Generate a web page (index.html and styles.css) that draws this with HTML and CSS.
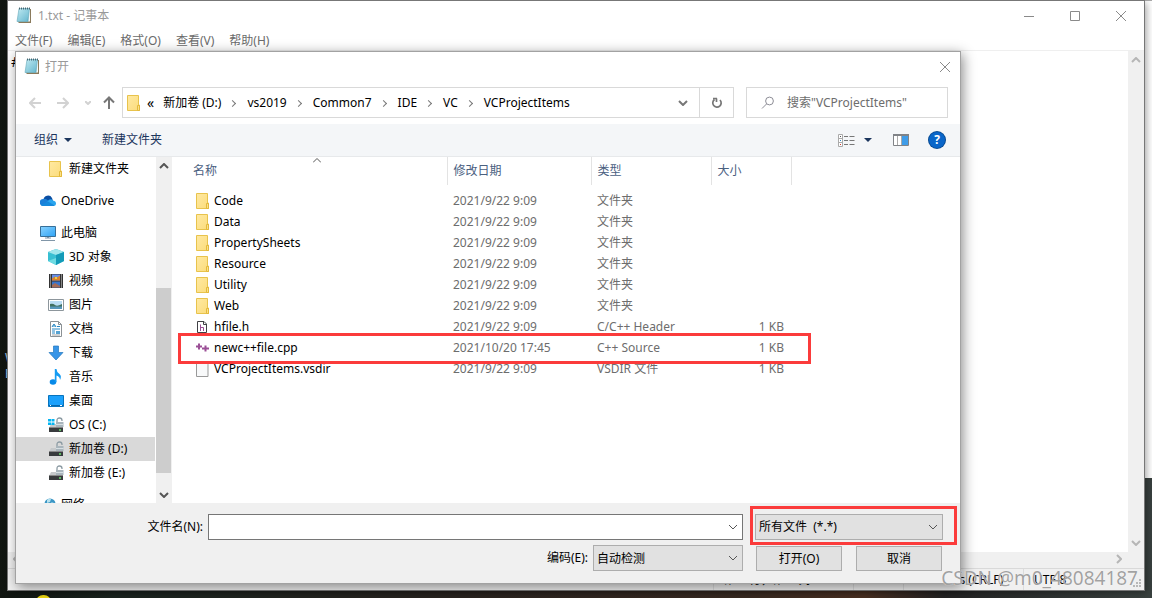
FILE: index.html
```html
<!DOCTYPE html>
<html lang="zh-CN">
<head>
<meta charset="utf-8">
<title>1.txt - 记事本</title>
<link rel="stylesheet" href="styles.css">
</head>
<body>
<svg class="defs" aria-hidden="true">
  <defs>
    <linearGradient id="gFolder" x1="0" y1="0" x2="1" y2="1"><stop offset="0" stop-color="#ffe9a2"/><stop offset="1" stop-color="#fbdc7b"/></linearGradient>
    <linearGradient id="gPad" x1="0" y1="0" x2="1" y2="1"><stop offset="0" stop-color="#c9eef5"/><stop offset="1" stop-color="#4fa9c4"/></linearGradient>
    <linearGradient id="gScreen" x1="0" y1="0" x2="1" y2="1"><stop offset="0" stop-color="#8ad3ff"/><stop offset="1" stop-color="#2ea3f5"/></linearGradient>
    <symbol id="folder" viewBox="0 0 14 16"><path d="M.5.5h11v9.500h1v5.500H.5z" fill="url(#gFolder)" stroke="#e8c34c"/><path d="M10.500 15.500v-5h2v5z" fill="#fbe189" stroke="#e3b93c"/></symbol>
    <symbol id="notepad" viewBox="0 0 16 17"><path d="M4 2h11v14H3l-1-1z" fill="#8a7a5c"/><path d="M4 2h10v12.500H2z" fill="#f4f8f8"/><path d="M3 1.500h10.500L12 14.500H1z" fill="url(#gPad)" stroke="#64a9bb" stroke-width=".6"/><path d="M3.500 5h9M3.300 7h9M3 9h9M2.700 11h9M2.400 13h9" stroke="#a6dce8" stroke-width=".5"/><path d="M3.500.5v2M5.500.5v2M7.500.5v2M9.500.5v2M11.500.5v2M13.500.5v2" stroke="#3b5964" stroke-width=".9"/></symbol>
    <symbol id="lock" viewBox="0 0 16 16"><path d="M9 6V3.500Q9 1 11.500 1T14 3.500V4" fill="none" stroke="#8d9ca4" stroke-width="1.300"/><path d="M8 5h7.500v5H8z" fill="#a9b5bc"/><path d="M8 7.500h7.500" stroke="#d7dfe3"/><path d="M3 7h5v3h7v1H1z" fill="#c6c9cb"/><path d="M1 10.500h14V15H1z" fill="#383b3d"/><path d="M1 10.500h14" stroke="#888"/><path d="M11 13h2" stroke="#67e06b" stroke-width="1.500"/></symbol>
    <symbol id="down" viewBox="0 0 10 6"><path d="M1 1l4 4 4-4" fill="none" stroke="currentColor"/></symbol>
  </defs>
</svg>
<div class="desktop">
  <span class="desk-label">W<br>E</span>
  <span class="desk-icon"></span>
  <div class="back-window"></div>

  <section class="notepad">
    <header class="titlebar">
      <svg class="app-icon"><use href="#notepad"/></svg>
      <h1>1.txt - 记事本</h1>
      <div class="caption">
        <button aria-label="最小化"><svg viewBox="0 0 12 12"><path d="M1 6.500h10"/></svg></button>
        <button aria-label="最大化"><svg viewBox="0 0 12 12"><path d="M1.500 1.500h9v9h-9z"/></svg></button>
        <button aria-label="关闭"><svg viewBox="0 0 12 12"><path d="M1 1l10 10M11 1L1 11"/></svg></button>
      </div>
    </header>
    <nav class="menubar"><button>文件(F)</button><button>编辑(E)</button><button>格式(O)</button><button>查看(V)</button><button>帮助(H)</button></nav>
    <div class="editor">
      <div class="page">#</div>
      <div class="vbar"><svg viewBox="0 0 10 6"><path d="M1 5l4-4 4 4"/></svg><svg viewBox="0 0 10 6"><path d="M1 1l4 4 4-4"/></svg></div>
    </div>
    <div class="hbar"><svg viewBox="0 0 6 10"><path d="M5 1L1 5l4 4"/></svg><svg viewBox="0 0 6 10"><path d="M1 1l4 4-4 4"/></svg></div>
    <footer class="status"><span class="pos">第 1 行，第 1 列</span><span class="pct">100%</span><span class="eol">Windows (CRLF)</span><span class="enc">UTF-8</span></footer>
    <svg class="grip" viewBox="0 0 9 9"><path d="M6 0h2v2H6zM3 3h2v2H3zM6 3h2v2H6zM0 6h2v2H0zM3 6h2v2H3zM6 6h2v2H6z"/></svg>
  </section>

  <section class="dialog">
    <header class="dlg-title">
      <svg class="app-icon"><use href="#notepad"/></svg>
      <h2>打开</h2>
      <button aria-label="关闭对话框"><svg viewBox="0 0 12 12"><path d="M1 1l10 10M11 1L1 11"/></svg></button>
    </header>

    <div class="navrow">
      <div class="arrows">
        <button aria-label="后退"><svg width="12" height="12" viewBox="0 0 12 12"><path d="M12 6H1M6 1L1 6l5 5"/></svg></button>
        <button aria-label="前进"><svg width="12" height="12" viewBox="0 0 12 12"><path d="M0 6h11M6 1l5 5-5 5"/></svg></button>
        <button class="recent" aria-label="最近"><svg width="6" height="4" viewBox="0 0 6 4"><path d="M0 0l3 3 3-3"/></svg></button>
        <button class="up" aria-label="上移"><svg width="12" height="13" viewBox="0 0 12 13"><path d="M6 13V1.500M1 6.500l5-5 5 5"/></svg></button>
      </div>
      <div class="address">
        <svg class="folder"><use href="#folder"/></svg>
        <span class="more">«</span>
        <button>新加卷 (D:)</button><i></i><button>vs2019</button><i></i><button>Common7</button><i></i><button>IDE</button><i></i><button>VC</button><i></i><button>VCProjectItems</button>
        <button class="drop" aria-label="展开"><svg width="10" height="6" viewBox="0 0 10 6"><path d="M1 1l4 4 4-4"/></svg></button>
        <button class="refresh" aria-label="刷新"><svg width="12" height="12" viewBox="0 0 12 12"><path d="M5.500 1.500V5M2 1.500h4M3.500 2.500A4.200 4.200 0 1 0 9 3" stroke-width="1.700"/></svg></button>
      </div>
      <label class="search"><svg width="14" height="14" viewBox="0 0 14 14"><circle cx="8.500" cy="5" r="3.900"/><path d="M5.500 8L1 12.500"/></svg><input type="text" aria-label="搜索" placeholder='搜索"VCProjectItems"'></label>
    </div>

    <div class="toolbar">
      <button>组织<b class="tri"></b></button>
      <button>新建文件夹</button>
      <div class="tools">
        <button aria-label="更改视图"><svg width="17" height="13" viewBox="0 0 17 13"><path d="M.5.5h4v12h-4zM.5 4.500h4M.5 8.500h4" fill="#fff" stroke="#aaa"/><path d="M2 2h1v1H2z" fill="#555"/><path d="M2 6h1v1H2z" fill="#2b88c8"/><path d="M2 10h1v1H2z" fill="#d23b2e"/><path d="M6 2.500h4m1.500 0h5M6 6.500h4m1.500 0h5M6 10.500h4m1.500 0h5" stroke="#777"/></svg></button>
        <button class="viewdrop" aria-label="视图选项"><b class="tri"></b></button>
        <button class="pane" aria-label="预览窗格"><svg width="16" height="12" viewBox="0 0 16 12"><path d="M.5.5h15v11H.5z" fill="#fff" stroke="#808387"/><path d="M0 0h16v2H0z" fill="#808387"/><path d="M4.500 2v9M8.500 2v9" stroke="#aaa"/><path d="M9 2h6v9H9z" fill="#3f9ce8"/></svg></button>
        <button class="help" aria-label="帮助">?</button>
      </div>
    </div>

    <div class="content">
      <nav class="tree">
        <a href="#" class="child"><svg class="folder"><use href="#folder"/></svg>新建文件夹</a>
        <a href="#" class="root"><svg viewBox="0 0 16 16"><path d="M3.500 7A4.500 4.500 0 0 1 12 5l1 3-8 3z" fill="#0a4ea3"/><path d="M3.500 13A3.500 3.500 0 0 1 3 6q2.500-.8 4.500 1L13 11z" fill="#1b7fd8"/><path d="M7.500 8.500Q10 4.500 13 7.500q3 .5 3 3T13 13H3.500z" fill="#2aa5ee"/><path d="M1 12l7-3.500 6.500 4Q14 13 13 13H3.500Q2 13 1 12z" fill="#1689dc"/></svg>OneDrive</a>
        <a href="#" class="root pc"><svg viewBox="0 0 16 16"><path d="M.5 1.500h15v10H.5z" fill="url(#gScreen)" stroke="#376f98"/><path d="M5 13h6M1 15.500h14" stroke="#8196a8"/><path d="M7 12h2v1H7z" fill="#8196a8"/></svg>此电脑</a>
        <a href="#" class="child"><svg viewBox="0 0 16 16"><path d="M8 0l8 3v9l-8 4-8-4V3z" fill="#37bfd2"/><path d="M8 0l8 3-8 3-8-3z" fill="#a0e6ec"/><path d="M8 6l8-3v9l-8 4z" fill="#139bb8"/><path d="M0 12l8-3v7z" fill="#6fdbe2"/></svg>3D 对象</a>
        <a href="#" class="child"><svg viewBox="0 0 16 16"><path d="M1 1h14v14H1z" fill="#333"/><path d="M4 1.500h8v6H4z" fill="#668ee8"/><path d="M4 5.500l3-2 2 1 3-2v5H4z" fill="#dc802d"/><path d="M7 4h2v2H7z" fill="#e5d344"/><path d="M4 8.500h8v6H4z" fill="#3a75cb"/><path d="M4 12l3-2 5 3v1.500H4z" fill="#a46c59"/><path d="M2.500 1.500v13M13.500 1.500v13" stroke="#ddd" stroke-dasharray="1 1"/></svg>视频</a>
        <a href="#" class="child"><svg viewBox="0 0 16 16"><path d="M.5 2.500h15v11H.5z" fill="#fff" stroke="#8d969c"/><path d="M2 4h12v8H2z" fill="#b9dcf3"/><path d="M2 7q3-1 5 1t7-1v3H2z" fill="#41705f"/><path d="M2 9.500h12V12H2z" fill="#5696bb"/></svg>图片</a>
        <a href="#" class="child"><svg viewBox="0 0 16 16"><path d="M2.500.5h8l3 3v12h-11z" fill="#fff" stroke="#8b9195"/><path d="M10.500.5v3h3" fill="none" stroke="#8b9195"/><path d="M4 6l2-3 2 3M4.500 5h3M4 8h8M4 10h3M4 12h3M9 5.500h3" fill="none" stroke="#2588c5"/><path d="M8 10h4v3H8z" fill="#56a2d1"/><path d="M4 14h8" stroke="#666" stroke-width=".6"/></svg>文档</a>
        <a href="#" class="child"><svg viewBox="0 0 16 16"><path d="M5.500 1h5v6.500h4.500L8 15 1 7.500h4.500z" fill="#3795e7" stroke="#2377bd" stroke-width=".7"/></svg>下载</a>
        <a href="#" class="child"><svg viewBox="0 0 16 16"><ellipse cx="5" cy="13" rx="3.300" ry="2.700" fill="#0789e8"/><path d="M6.800 13V0h1.700q0 3 3 5 2.500 2 .5 6 0-3.500-3.500-4.500V13z" fill="#159cf3"/></svg>音乐</a>
        <a href="#" class="child"><svg viewBox="0 0 16 16"><path d="M.5 2.500h15v11H.5z" fill="#1ba1fc" stroke="#0874bd"/><path d="M1 12.500h14" stroke="#0868ad"/><path d="M2 12.500h1m9 0h2" stroke="#fff"/></svg>桌面</a>
        <a href="#" class="child"><svg viewBox="0 0 16 16"><use href="#lock"/><path d="M0 2h3v2.500H0zM3.500 2h3v2.500h-3zM0 5.500h3V8H0zM3.500 5.500h3V8h-3z" fill="#04b5f2"/></svg>OS (C:)</a>
        <a href="#" class="child selected"><svg><use href="#lock"/></svg>新加卷 (D:)</a>
        <a href="#" class="child"><svg><use href="#lock"/></svg>新加卷 (E:)</a>
        <a href="#" class="root net"><svg viewBox="0 0 16 16"><circle cx="10" cy="7" r="5.500" fill="#3b96c5"/><path d="M7 3q2-2 4-1l-1 3-3 1zM11 5l3 1v3z" fill="#b8e2ee"/></svg>网络</a>
      </nav>
      <div class="treebar"><svg viewBox="0 0 10 6"><path d="M1 5l4-4 4 4"/></svg><div class="track"><div class="thumb"></div></div><svg viewBox="0 0 10 6"><path d="M1 1l4 4 4-4"/></svg></div>
      <div class="files">
        <svg class="sort" width="8" height="5" viewBox="0 0 8 5"><path d="M0 4.500l4-4 4 4"/></svg>
        <table>
          <colgroup><col class="c-name"><col class="c-date"><col class="c-type"><col class="c-size"></colgroup>
          <thead><tr><th>名称</th><th>修改日期</th><th>类型</th><th>大小</th></tr></thead>
          <tbody>
            <tr><td><span class="name"><svg class="folder"><use href="#folder"/></svg>Code</span></td><td>2021/9/22 9:09</td><td>文件夹</td><td></td></tr>
            <tr><td><span class="name"><svg class="folder"><use href="#folder"/></svg>Data</span></td><td>2021/9/22 9:09</td><td>文件夹</td><td></td></tr>
            <tr><td><span class="name"><svg class="folder"><use href="#folder"/></svg>PropertySheets</span></td><td>2021/9/22 9:09</td><td>文件夹</td><td></td></tr>
            <tr><td><span class="name"><svg class="folder"><use href="#folder"/></svg>Resource</span></td><td>2021/9/22 9:09</td><td>文件夹</td><td></td></tr>
            <tr><td><span class="name"><svg class="folder"><use href="#folder"/></svg>Utility</span></td><td>2021/9/22 9:09</td><td>文件夹</td><td></td></tr>
            <tr><td><span class="name"><svg class="folder"><use href="#folder"/></svg>Web</span></td><td>2021/9/22 9:09</td><td>文件夹</td><td></td></tr>
            <tr><td><span class="name"><svg class="folder" viewBox="0 0 14 16"><path d="M1.500 2.500h6.500l2.500 2.500v8.500h-9z" fill="#fff" stroke="#404045"/><path d="M7.500 2.500v3h3" fill="none" stroke="#404045"/><path d="M4.500 5.500V12M4.500 8.500h3V12" fill="none" stroke="#9b4f96"/></svg>hfile.h</span></td><td>2021/9/22 9:09</td><td>C/C++ Header</td><td>1 KB</td></tr>
            <tr><td><span class="name"><svg class="folder" viewBox="0 0 14 16"><path d="M0 6.500h6M3 3.500v6M6 8.500h7M9.500 5.500v6" stroke="#9b4f96" stroke-width="2"/></svg>newc++file.cpp</span></td><td>2021/10/20 17:45</td><td>C++ Source</td><td>1 KB</td></tr>
            <tr><td><span class="name"><svg class="folder" viewBox="0 0 14 16"><path d="M.5.5h9l2.500 3v12H.5z" fill="#f8f9fa" stroke="#999"/></svg>VCProjectItems.vsdir</span></td><td>2021/9/22 9:09</td><td>VSDIR 文件</td><td>1 KB</td></tr>
          </tbody>
        </table>
        <div class="mark-row"></div>
      </div>
    </div>

    <form class="bottom">
      <label for="fname">文件名(N):</label>
      <div class="field name-field"><input id="fname" type="text"><svg><use href="#down"/></svg></div>
      <div class="field filter"><select aria-label="文件类型"><option>所有文件&nbsp; (*.*)</option></select><svg><use href="#down"/></svg><span class="mark-filter"></span></div>
      <div class="encoding"><label for="enc">编码(E):</label><div class="field"><select id="enc"><option>自动检测</option></select><svg><use href="#down"/></svg></div></div>
      <div class="actions"><button type="button">打开(O)</button><button type="button">取消</button></div>
    </form>
  </section>
  <div class="watermark">CSDN @m0_48084187</div>
</div>
</body>
</html>
```
FILE: styles.css
```css
* { box-sizing: border-box; }
body { margin: 0; font: 12px/16px "Noto Sans", "Noto Sans CJK SC", sans-serif; color: #000; }
button, input, select { font: inherit; color: inherit; border: 0; border-radius: 0; padding: 0; margin: 0; background: none; }
a { color: inherit; text-decoration: none; }
h1, h2 { margin: 0; font-size: 12px; font-weight: 400; color: #999; }
svg { display: block; flex: none; fill: none; }
.defs { position: absolute; width: 0; height: 0; }
.folder { width: 14px; height: 16px; }
.app-icon { width: 16px; height: 17px; }

.desktop { position: relative; height: 100vh; min-height: 500px; overflow: hidden; background: linear-gradient(90deg, #111611 0, #1b2520 10%, #2a2420 40%, #3a2b22 65%, #4a3022 75%, #232323 82%, #39413f 100%); }
.desk-label { position: absolute; left: 5px; top: 350px; color: #a9c8ea; }
.desk-icon { position: absolute; left: 36px; bottom: -11px; width: 15px; height: 14px; border-radius: 8px; background: #f3dc14; }
.back-window { position: absolute; top: 0; right: 0; bottom: 120px; width: 637px; background: #fff; border-top: 1px solid #aaa; }

.notepad { position: absolute; inset: 1px 8px 8px; display: flex; flex-direction: column; background: #fff; box-shadow: 0 0 0 1px #777, 2px 2px 8px rgba(0,0,0,.4); }
.titlebar { display: flex; align-items: center; gap: 6px; height: 29px; padding-left: 8px; }
.caption { display: flex; margin-left: auto; }
.caption button, .dlg-title button { width: 46px; height: 28px; display: grid; place-items: center; }
.caption svg, .dlg-title button svg { width: 12px; height: 12px; stroke: #8a8a8a; }
.menubar { display: flex; gap: 15px; height: 20px; padding: 3px 7px 1px; color: #6b6b6b; }
.editor { flex: 1; display: flex; border-top: 1px solid #efefef; min-height: 0; }
.page { flex: 1; padding: 3px; font-size: 14px; }
.vbar, .hbar { display: flex; justify-content: space-between; background: #f0f0f0; }
.vbar { flex-direction: column; align-items: center; width: 16px; padding: 6px 0; }
.hbar { align-items: center; height: 17px; padding: 0 22px 2px 5px; border-bottom: 1px solid #d9d9d9; }
.vbar svg { width: 10px; height: 6px; stroke: #b6b6b6; stroke-width: 2; }
.hbar svg { width: 6px; height: 10px; stroke: #b6b6b6; stroke-width: 2; }
.status { display: flex; justify-content: flex-end; height: 21px; background: #f0f0f0; white-space: nowrap; line-height: 21px; }
.status span { border-left: 1px solid #dcdcdc; padding-left: 10px; }
.pos { width: 140px; }
.pct { width: 50px; }
.eol { width: 120px; }
.enc { width: 121px; }
.grip { position: absolute; right: 2px; bottom: 2px; width: 9px; height: 9px; fill: #b8b8b8; }

.dialog { position: absolute; inset: 51px 191px 14px 15px; display: flex; flex-direction: column; background: #fff; border: 1px solid #a2a2a2; box-shadow: 2px 3px 12px rgba(0,0,0,.45); }
.dlg-title { display: flex; align-items: center; gap: 5px; height: 29px; padding-left: 8px; }
.dlg-title button { margin-left: auto; width: 30px; }
.navrow { display: flex; height: 43px; padding: 6px 12px 6px 13px; }
.arrows { display: flex; align-items: center; width: 93px; stroke: #d2d2d2; stroke-width: 2; }
.arrows button { width: 28px; }
.arrows .recent { width: 18px; }
.arrows .up { width: 14px; stroke: #777; }
.address { flex: 1; display: flex; align-items: center; border: 1px solid #d9d9d9; padding-left: 4px; min-width: 0; white-space: nowrap; }
.address .more { padding: 0 9px 0 6px; font-size: 14px; }
.address i { width: 5px; height: 5px; margin: 2px 12px 0 9px; border: solid #777; border-width: 1px 1px 0 0; transform: rotate(45deg); }
.address .drop { flex: none; margin-left: auto; width: 32px; padding-left: 11px; height: 100%; stroke: #777; stroke-width: 2; }
.address .refresh { flex: none; width: 34px; height: 100%; padding-left: 11px; border-left: 1px solid #d9d9d9; stroke: #777; }
.search { display: flex; align-items: center; gap: 12px; width: 202px; margin-left: 12px; padding-left: 14px; border: 1px solid #d9d9d9; stroke: #8d8d96; }
.search input { width: 150px; outline: 0; }
.search input::placeholder { color: #6d6d6d; opacity: 1; }
.toolbar { display: flex; align-items: center; gap: 30px; height: 33px; padding: 0 15px 0 18px; background: #f4f6f8; border-bottom: 1px solid #e7e9eb; color: #1b355d; }
.toolbar button { display: flex; align-items: center; gap: 6px; }
.tri { border: solid transparent; border-width: 4px 4px 0; border-top-color: #1b355d; }
.tools { display: flex; align-items: center; margin-left: auto; }
.tools .viewdrop { margin: 0 21px 0 9px; }
.tools .pane { margin-right: 20px; }
.tools .help { width: 16px; height: 16px; border-radius: 50%; background: #0a66c9; box-shadow: 0 0 0 1px #084a91; justify-content: center; color: #fff; font-weight: 700; }

.content { flex: 1; display: flex; min-height: 0; overflow: hidden; }
.tree { width: 140px; overflow: hidden; white-space: nowrap; }
.tree a { display: flex; align-items: center; gap: 5px; height: 24px; margin-right: 1px; }
.tree svg { width: 16px; height: 16px; }
.child { padding-left: 32px; }
.root { padding-left: 24px; }
.tree .root { margin-top: 8px; }
.selected { background: #d9d9d9; }
.treebar { display: flex; flex-direction: column; align-items: center; width: 16px; padding: 6px 0 5px; background: #f0f0f0; }
.treebar > svg { width: 10px; height: 6px; stroke: #555; stroke-width: 2; }
.track { flex: 1; width: 100%; display: flex; flex-direction: column; justify-content: flex-end; padding: 0 1px 19px 0; }
.thumb { height: 61%; background: #cdcdcd; }
.files { position: relative; flex: 1; min-width: 0; padding-left: 15px; }
.sort { position: absolute; left: 141px; top: 1px; stroke: #555; }
table { border-collapse: collapse; table-layout: fixed; width: 604px; }
.c-name { width: 260px; }
.c-date { width: 144px; }
.c-type { width: 120px; }
.c-size { width: 80px; }
th { height: 28px; padding: 0 6px; text-align: left; font-weight: 400; color: #4a607f; border-right: 1px solid #e3e3e3; }
thead::after { content: ""; display: block; height: 5px; }
td { height: 21px; padding: 0 6px; color: #6d6d6d; white-space: nowrap; }
td:first-child { color: #000; padding-left: 9px; }
td:last-child { text-align: right; padding-right: 7px; }
.name { display: flex; align-items: center; gap: 4px; }
.mark-row { position: absolute; left: 6px; top: 176px; width: 633px; height: 31px; border: 3px solid #fb3b3b; }

.bottom { display: grid; grid-template-columns: 188px 1fr 188px; column-gap: 4px; align-items: start; align-content: start; height: 80px; padding: 11px 17px 0 0; background: #f0f0f0; }
.bottom > label { text-align: right; line-height: 26px; padding-right: 1px; }
.field { position: relative; height: 26px; background: #e1e1e1; border: 1px solid #adadad; }
.field input, .field select { display: block; width: 100%; height: 100%; padding: 0 3px; appearance: none; outline: 0; }
.field svg { position: absolute; right: 4px; top: 9px; width: 10px; height: 6px; color: #555; pointer-events: none; }
.name-field { margin-right: 8px; background: #fff; border-color: #767676; }
.mark-filter { position: absolute; inset: -9px -15px -6px -6px; border: 3px solid #fb3b3b; pointer-events: none; }
.encoding { grid-column: 1 / 3; display: flex; justify-content: flex-end; gap: 5px; margin: 5px 8px 0 0; line-height: 25px; }
.encoding .field { width: 150px; }
.actions { display: flex; gap: 14px; margin-top: 6px; padding: 0 1px; }
.actions button { flex: 1; height: 25px; border: 1px solid #adadad; background: #e1e1e1; }
.watermark { position: absolute; right: 14px; bottom: 8px; font-size: 19px; line-height: 24px; color: rgba(145,145,145,.85); text-shadow: 0 0 1px #fff; }
```
